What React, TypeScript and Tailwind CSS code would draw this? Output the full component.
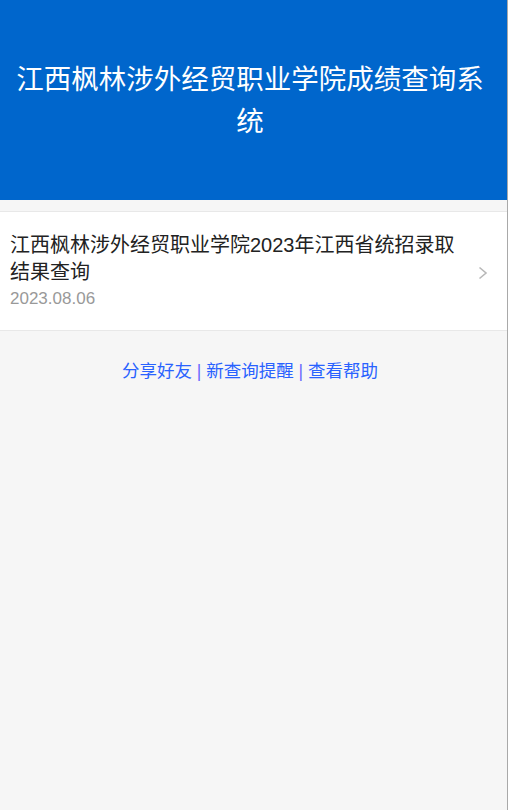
const font = {
  fontFamily: '"Liberation Sans", "Noto Sans CJK SC", sans-serif',
};

export default function App() {
  return (
    <div
      className="min-h-[810px] w-[508px] bg-[#f6f6f6] border-r border-[#a9a9a9]"
      style={font}
    >
      <header className="h-[200px] bg-[#0066cc] flex items-center justify-center pl-[13px] pr-[20px] pt-[2px]">
        <h1 className="text-white text-[27.5px] leading-[42px] text-center">
          江西枫林涉外经贸职业学院成绩查询系统
        </h1>
      </header>

      <div className="mt-[11px] bg-white border-y border-[#e8e8e8]">
        <div className="flex items-center pl-[10px] pr-[19px] pt-[20px] pb-[19px]">
          <div className="flex-1">
            <p className="text-[20px] leading-[27px] text-[#222]">
              江西枫林涉外经贸职业学院2023年江西省统招录取结果查询
            </p>
            <p className="text-[17px] leading-[24px] text-[#999] mt-[1px]">
              2023.08.06
            </p>
          </div>
          <svg width="10" height="14" viewBox="0 0 10 14" className="ml-2 mt-[2px]">
            <polyline
              points="1.5,1.5 8,7 1.5,12.5"
              fill="none"
              stroke="#b8b8b8"
              strokeWidth="1.6"
            />
          </svg>
        </div>
      </div>

      <div className="text-center text-[17.5px] text-[#2962ff] mt-[27px] pr-[7px]">
        <span>分享好友</span>
        <span className="text-[#6a6aff]"> | </span>
        <span>新查询提醒</span>
        <span className="text-[#6a6aff]"> | </span>
        <span>查看帮助</span>
      </div>
    </div>
  );
}
